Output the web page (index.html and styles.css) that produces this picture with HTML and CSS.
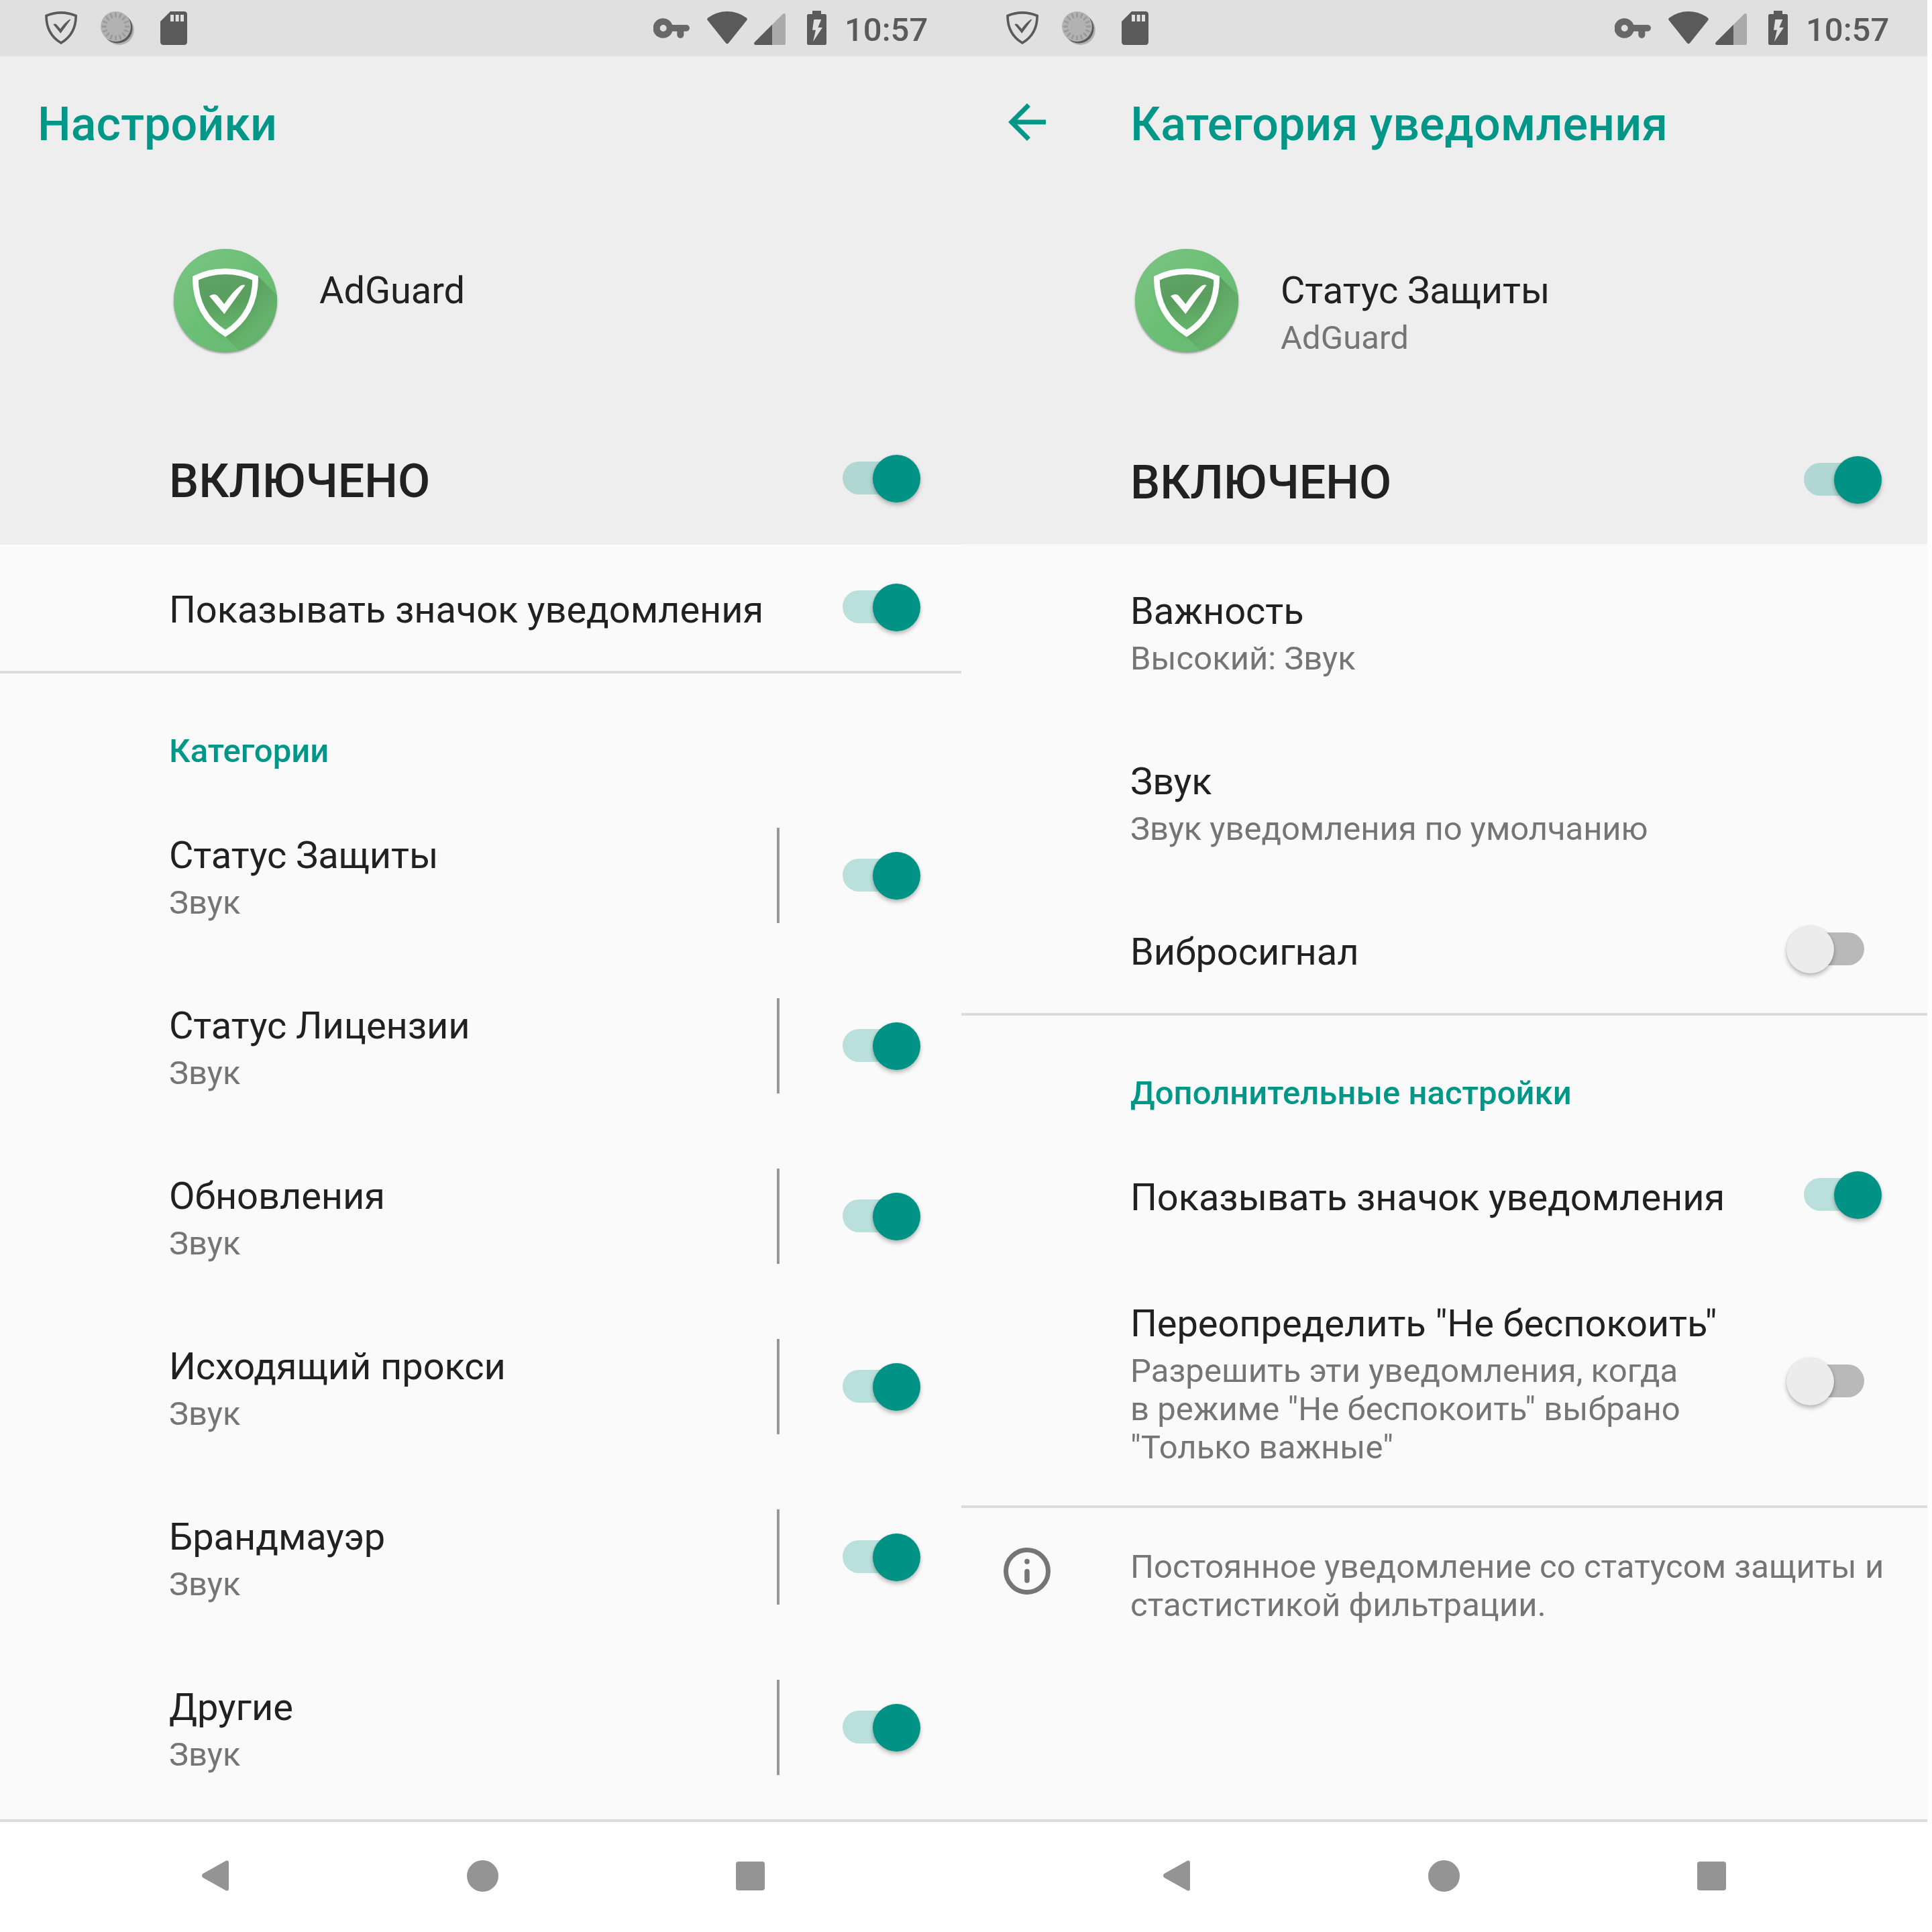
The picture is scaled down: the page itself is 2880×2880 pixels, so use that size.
FILE: index.html
```html
<!DOCTYPE html>
<html lang="ru">
<head>
<meta charset="utf-8">
<title>Настройки уведомлений</title>
<link rel="stylesheet" href="styles.css">
</head>
<body>
<svg class="defs" aria-hidden="true">
  <defs>
    <linearGradient id="disc" x1="0" y1="0" x2="1" y2="1">
      <stop offset="0" stop-color="#7ac483"/><stop offset=".5" stop-color="#6cbf76"/><stop offset="1" stop-color="#68b871"/>
    </linearGradient>
    <linearGradient id="cast" gradientUnits="userSpaceOnUse" x1="320" y1="300" x2="460" y2="440">
      <stop offset="0" stop-color="#589a5e"/><stop offset="1" stop-color="#64b26c"/>
    </linearGradient>
    <linearGradient id="inner" gradientUnits="userSpaceOnUse" x1="290" y1="210" x2="330" y2="450">
      <stop offset="0" stop-color="#5da262"/><stop offset=".5" stop-color="#5a9f5f"/><stop offset="1" stop-color="#65b56b"/>
    </linearGradient>
    <filter id="soft" x="-10%" y="-10%" width="120%" height="125%"><feGaussianBlur stdDeviation="5"/></filter>
    <filter id="glow" x="-20%" y="-20%" width="140%" height="140%"><feGaussianBlur stdDeviation="12"/></filter>
    <clipPath id="discClip"><circle cx="318" cy="324" r="231"/></clipPath>
  </defs>
  <symbol id="i-shield" viewBox="198 51 150 150">
    <path d="M273 56.5Q238 56.5 207 70.5C207 120 222 162 273 192C324 162 339.500 120 339.500 70.500Q308 56.500 273 56.500Z" fill="none" stroke="#5a5a5a" stroke-width="11"/>
    <path d="M238 109Q246 104 252 109L270 129Q290 100 312 86L316 88L271 149Z" fill="#5a5a5a"/>
  </symbol>
  <symbol id="i-disc" viewBox="447 51 153 150">
    <circle cx="532.500" cy="134" r="67" fill="#b2b2b2"/>
    <circle cx="525.500" cy="126.500" r="67" fill="#5a5a5a"/>
    <circle cx="517.500" cy="118.500" r="67.500" fill="#b2b2b2"/>
    <g stroke="#9b9b9b" stroke-width="8.500" stroke-linecap="round">
      <path id="t" d="M561.500 118.500H576.500M473.500 118.500H458.500M517.500 74.500V59.500M517.500 162.500V177.500"/>
      <use href="#t" transform="rotate(22.500 517.500 118.500)"/>
      <use href="#t" transform="rotate(45 517.500 118.500)"/>
      <use href="#t" transform="rotate(67.500 517.500 118.500)"/>
    </g>
  </symbol>
  <symbol id="i-sd" viewBox="717 51 120 150">
    <path fill="#5a5a5a" fill-rule="evenodd" d="M762 51H823Q837 51 837 65V187Q837 201 823 201H731Q717 201 717 187V96ZM762 66V96H777V66ZM785 66V96H800V66ZM807 66V96H822V66Z"/>
  </symbol>
  <symbol id="i-key" viewBox="102 81 162 90">
    <path fill="#686868" fill-rule="evenodd" d="M146 81.500A44.500 44.500 0 0 1 187 111H249.500A14.500 14.500 0 0 1 249.500 140H238V156A15 15 0 0 1 208 156V140H187A44.500 44.500 0 1 1 146 81.500ZM146 111A15 15 0 1 0 146 141A15 15 0 1 0 146 111Z"/>
  </symbol>
  <symbol id="i-wifi" viewBox="342 51 180 147">
    <path fill="#5a5a5a" d="M345 80Q385 51 432 51Q479 51 519 80Q523 84 520 90L438 193Q432 199 426 193L344 90Q341 84 345 80Z"/>
  </symbol>
  <symbol id="i-signal" viewBox="552 60 141 141">
    <path fill="#aaa" d="M633 110L681 62Q685 59 689 61Q693 63 693 67V195Q693 201 687 201H633Z"/>
    <path fill="#5a5a5a" d="M633 110V201H558Q552 200 552 194Q552 191 555 188Z"/>
  </symbol>
  <symbol id="i-battery" viewBox="789 48 87 153">
    <path fill="#5a5a5a" fill-rule="evenodd" d="M813 48H852V63H869Q876 63 876 70V194Q876 201 869 201H796Q789 201 789 194V70Q789 63 796 63H813ZM820 87L813 134H828L816 186L858 123H838L853 87Z"/>
  </symbol>
  <symbol id="i-app" viewBox="66 66 504 504">
    <circle cx="318" cy="330" r="231" fill="#000" opacity=".35" filter="url(#soft)"/>
    <circle cx="318" cy="324" r="231" fill="url(#disc)"/>
    <g clip-path="url(#discClip)">
      <path d="M464 216L600 350V600H430L318 486Z" fill="url(#cast)"/>
      <path d="M184 224Q318 170 452 224C452 340 410 420 318 480C226 420 184 340 184 224Z" fill="#3c8a42" opacity=".28" transform="translate(0 10)" filter="url(#glow)"/>
    </g>
    <path d="M318 194Q245 194 184 224C184 325 222 410 318 471C414 410 452 325 452 224Q391 194 318 194Z" fill="url(#inner)" stroke="#fff" stroke-width="26"/>
    <path d="M246 304Q268 289 283 303L313 340Q349 285 384 259Q397 250 406 256L313 384Z" fill="#fff"/>
  </symbol>
  <symbol id="i-back" viewBox="0 0 24 24"><path fill="#009688" d="M20 11H7.830l5.590-5.590L12 4l-8 8 8 8 1.410-1.410L7.830 13H20v-2z"/></symbol>
  <symbol id="i-info" viewBox="0 0 70 70">
    <circle cx="35" cy="35" r="31.500" fill="none" stroke="#757575" stroke-width="7"/>
    <path d="M35 20.600V20.900M35 35.500V49" stroke="#757575" stroke-width="7.500" stroke-linecap="round"/>
  </symbol>
  <symbol id="i-navback" viewBox="0 0 40 46"><path fill="#949494" d="M1.500 20L36 .8Q40 -.8 40 4V42Q40 46.800 36 45.200L1.500 26Q-1.500 23 1.500 20Z"/></symbol>
</svg>

<main class="screens">
  <section class="phone phone-left">
    <div class="statusbar">
      <svg class="s-shield"><use href="#i-shield"/></svg><svg class="s-disc"><use href="#i-disc"/></svg><svg class="s-sd"><use href="#i-sd"/></svg>
      <svg class="s-key"><use href="#i-key"/></svg><svg class="s-wifi"><use href="#i-wifi"/></svg><svg class="s-signal"><use href="#i-signal"/></svg><svg class="s-battery"><use href="#i-battery"/></svg>
      <span class="time">10:57</span>
    </div>
    <header class="header">
      <div class="toolbar"><h1>Настройки</h1></div>
      <div class="app">
        <svg class="app-icon"><use href="#i-app"/></svg>
        <div class="text"><div class="title">AdGuard</div></div>
      </div>
      <div class="master"><span>ВКЛЮЧЕНО</span><i class="switch on"></i></div>
    </header>
    <div class="list">
      <div class="row single"><div class="text"><div class="title">Показывать значок уведомления</div></div><i class="switch on"></i></div>
      <h2 class="category">Категории</h2>
      <div class="row"><div class="text"><div class="title">Статус Защиты</div><div class="sub">Звук</div></div><i class="bar"></i><i class="switch on"></i></div>
      <div class="row"><div class="text"><div class="title">Статус Лицензии</div><div class="sub">Звук</div></div><i class="bar"></i><i class="switch on"></i></div>
      <div class="row"><div class="text"><div class="title">Обновления</div><div class="sub">Звук</div></div><i class="bar"></i><i class="switch on"></i></div>
      <div class="row"><div class="text"><div class="title">Исходящий прокси</div><div class="sub">Звук</div></div><i class="bar"></i><i class="switch on"></i></div>
      <div class="row"><div class="text"><div class="title">Брандмауэр</div><div class="sub">Звук</div></div><i class="bar"></i><i class="switch on"></i></div>
      <div class="row"><div class="text"><div class="title">Другие</div><div class="sub">Звук</div></div><i class="bar"></i><i class="switch on"></i></div>
    </div>
    <nav class="navbar"><svg class="nav-back"><use href="#i-navback"/></svg><i class="nav-home"></i><i class="nav-recent"></i></nav>
  </section>

  <section class="phone phone-right">
    <div class="statusbar">
      <svg class="s-shield"><use href="#i-shield"/></svg><svg class="s-disc"><use href="#i-disc"/></svg><svg class="s-sd"><use href="#i-sd"/></svg>
      <svg class="s-key"><use href="#i-key"/></svg><svg class="s-wifi"><use href="#i-wifi"/></svg><svg class="s-signal"><use href="#i-signal"/></svg><svg class="s-battery"><use href="#i-battery"/></svg>
      <span class="time">10:57</span>
    </div>
    <header class="header">
      <div class="toolbar"><svg class="back"><use href="#i-back"/></svg><h1>Категория уведомления</h1></div>
      <div class="app">
        <svg class="app-icon"><use href="#i-app"/></svg>
        <div class="text"><div class="title">Статус Защиты</div><div class="sub loose">AdGuard</div></div>
      </div>
      <div class="master"><span>ВКЛЮЧЕНО</span><i class="switch on"></i></div>
    </header>
    <div class="list">
      <div class="row"><div class="text"><div class="title">Важность</div><div class="sub">Высокий: Звук</div></div></div>
      <div class="row"><div class="text"><div class="title">Звук</div><div class="sub tight">Звук уведомления по умолчанию</div></div></div>
      <div class="row single"><div class="text"><div class="title">Вибросигнал</div></div><i class="switch"></i></div>
      <h2 class="category">Дополнительные настройки</h2>
      <div class="row single"><div class="text"><div class="title">Показывать значок уведомления</div></div><i class="switch on"></i></div>
      <div class="row tall"><div class="text"><div class="title">Переопределить "Не беспокоить"</div><div class="sub loose">Разрешить эти уведомления, когда<br>в режиме "Не беспокоить" выбрано<br>"Только важные"</div></div><i class="switch"></i></div>
      <div class="footer"><svg class="info"><use href="#i-info"/></svg><p class="sub loose">Постоянное уведомление со статусом защиты и<br>стастистикой фильтрации.</p></div>
    </div>
    <nav class="navbar"><svg class="nav-back"><use href="#i-navback"/></svg><i class="nav-home"></i><i class="nav-recent"></i></nav>
  </section>
</main>
</body>
</html>
```
FILE: styles.css
```css
* { box-sizing: border-box; margin: 0; padding: 0; }
body { background: #fff; font-family: Roboto, "Noto Sans", sans-serif; color: #212121; overflow: hidden; }
svg { display: block; flex: none; }
.defs { position: absolute; width: 0; height: 0; }

.screens { display: flex; width: 2880px; height: 2880px; }
.phone { display: flex; flex-direction: column; height: 2880px; overflow: hidden; flex: none; }
.phone-left { width: 1433px; }
.phone-right { width: 1440px; }
.phone > * { width: 1440px; flex: none; }

/* status bar */
.statusbar { height: 84px; background: #e0e0e0; display: flex; align-items: flex-start; padding: 16px 0 0 66px; }
.s-shield { width: 50px; height: 50px; margin-top: 1px; }
.s-disc { width: 51px; height: 50px; margin: 1px 0 0 33px; }
.s-sd { width: 40px; height: 50px; margin: 1px 0 0 39px; }
.s-key { width: 54px; height: 30px; margin: 11px 0 0 695px; }
.s-wifi { width: 60px; height: 49px; margin: 1px 0 0 26px; }
.s-signal { width: 47px; height: 47px; margin: 4px 0 0 10px; }
.s-battery { width: 29px; height: 51px; margin-left: 32px; }
.time { font-size: 49px; font-weight: 500; line-height: 57px; color: #5a5a5a; margin-left: 27px; }

/* header */
.header { height: 728px; background: #eee; display: flex; flex-direction: column; }
.toolbar { height: 278px; padding: 60px 0 0 56px; display: flex; align-items: flex-start; }
h1 { font-size: 70px; font-weight: 500; line-height: 82px; letter-spacing: .08px; color: #009688; }
.back { width: 84px; height: 84px; margin: -4px 112px 0 0; }
.app { height: 248px; padding-left: 252px; display: flex; align-items: flex-start; gap: 56px; }
.app-icon { width: 168px; height: 168px; }
.app .text { padding-top: 38px; }
.master { flex: 1; padding: 5px 68px 0 252px; display: flex; align-items: center; justify-content: space-between; }
.master span { font-size: 70px; font-weight: 500; line-height: 82px; padding-top: 6px; }

.title { font-size: 56px; line-height: 66px; letter-spacing: -.08px; white-space: nowrap; }
.sub { font-size: 49px; line-height: 57px; color: #757575; margin-top: 9px; white-space: nowrap; }
.sub.tight { letter-spacing: -.06px; }
.sub.loose { letter-spacing: .06px; }

/* preference list */
.list { flex: 1 0 0; background: #fafafa; }
.row { height: 254px; padding: 0 68px 0 252px; display: flex; align-items: center; }
.row .text { flex: 1; align-self: flex-start; padding-top: 64px; }
.row.single { height: 188px; }
.row.single .switch, .row.tall .switch { margin-bottom: 1px; }
.row.tall { height: 368px; }
.category { height: 178px; border-top: 4px solid #dcdcdc; padding: 87px 0 0 252px; font-size: 49px; font-weight: 500; line-height: 57px; letter-spacing: .06px; color: #009688; }
.bar { width: 4px; height: 142px; background: #969696; margin-right: 67px; }

/* switch: pill track with a larger round thumb on either end */
.switch { position: relative; width: 143px; height: 71px; flex: none; }
.switch::before { content: ""; position: absolute; left: 27px; top: 10px; width: 90px; height: 49px; border-radius: 25px; background: rgba(0, 0, 0, .26); }
.switch::after { content: ""; position: absolute; left: 1px; top: 0; width: 71px; height: 71px; border-radius: 50%; background: #ececec; box-shadow: 0 4px 6px rgba(0, 0, 0, .26), 0 0 3px rgba(0, 0, 0, .1); }
.switch.on::before { background: rgba(0, 150, 136, .26); }
.switch.on::after { left: 72px; background: #009385; }

.phone-right .header { height: 727px; }
.phone-right .master { padding-top: 10px; }
.phone-right .list { padding-top: 3px; }

.footer { height: 180px; border-top: 4px solid #dcdcdc; padding: 59px 0 0 63px; display: flex; align-items: flex-start; }
.info { width: 70px; height: 70px; }
.footer .sub { margin: 0 0 0 119px; }

/* navigation */
.navbar { height: 168px; background: #fff; border-top: 4px solid #dcdcdc; padding: 0 0 4px 301px; display: flex; align-items: center; }
.nav-back { width: 40px; height: 46px; }
.nav-home { width: 47px; height: 47px; border-radius: 50%; background: #949494; margin-left: 355px; }
.nav-recent { width: 43px; height: 43px; border-radius: 4px; background: #949494; margin-left: 354px; }
```
